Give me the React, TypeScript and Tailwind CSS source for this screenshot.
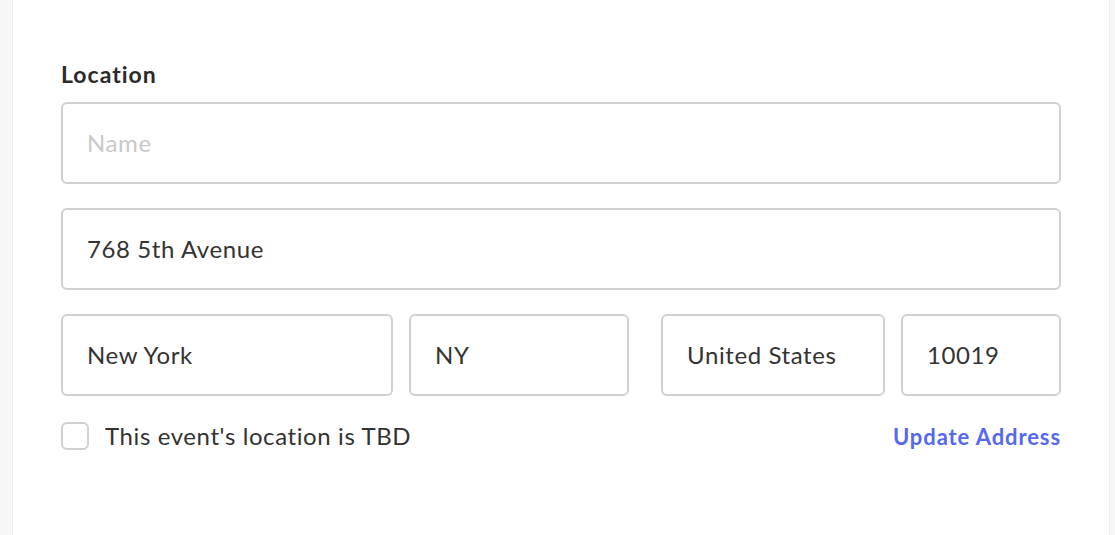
import React from 'react';

function Field({ value, placeholder, className = '' }: { value?: string; placeholder?: string; className?: string }) {
  return (
    <input
      readOnly
      value={value}
      placeholder={placeholder}
      className={`h-[82px] rounded-[6px] border-2 border-[#d0d0d0] bg-white px-[24px] pb-[1px] text-[24px] tracking-[0.6px] text-[#333333] outline-none placeholder:text-[#c9c9c9] ${className}`}
    />
  );
}

export default function App() {
  return (
    <div className="flex h-[535px] w-full bg-[#f7f7f7] font-['Lato',sans-serif]">
      <div className="ml-[12px] mr-[5px] flex-1 border-x border-[#ececec] bg-white px-[48px] pt-[60px]">
        <label className="block text-[23px] font-bold leading-[28px] tracking-[1px] text-[#2a2a2a]">Location</label>
        <div className="mt-[14px] flex flex-col gap-[24px]">
          <Field placeholder="Name" className="w-full" />
          <Field value="768 5th Avenue" className="w-full" />
          <div className="flex">
            <Field value="New York" className="w-[332px]" />
            <Field value="NY" className="ml-[16px] w-[220px]" />
            <Field value="United States" className="ml-[32px] w-[224px]" />
            <Field value="10019" className="ml-[16px] w-[160px]" />
          </div>
        </div>
        <div className="mt-[22px] flex items-center justify-between">
          <label className="flex items-center gap-[16px] text-[24px] leading-[32px] tracking-[0.6px] text-[#333333]">
            <span className="h-[28px] w-[28px] rounded-[6px] border-2 border-[#d0d0d0] bg-white" />
            This event's location is TBD
          </label>
          <a className="pt-[3px] text-[22px] font-bold leading-[32px] tracking-[0.9px] text-[#5468f0]">Update Address</a>
        </div>
      </div>
    </div>
  );
}
